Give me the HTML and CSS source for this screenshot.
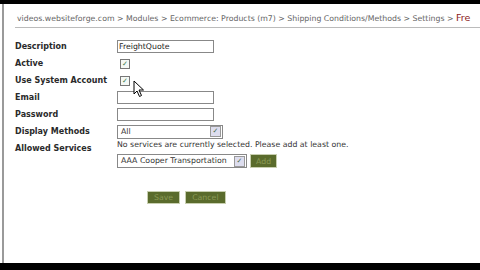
FILE: index.html
```html
<!DOCTYPE html>
<html lang="en">
<head>
    <meta charset="UTF-8">
    <title>Shipping Method Settings</title>
    <link rel="stylesheet" href="styles.css">
</head>
<body>
<div class="topbar"></div>
<div class="page">
    <div class="crumbs">
        videos.websiteforge.com &gt; Modules &gt; Ecommerce: Products (m7) &gt; Shipping Conditions/Methods &gt; Settings &gt; <span class="current">Fre</span>
    </div>

    <div class="form">
        <div class="row">
            <label>Description</label>
            <input class="text" type="text" value="FreightQuote">
        </div>
        <div class="row">
            <label>Active</label>
            <span class="check">&#10003;</span>
        </div>
        <div class="row">
            <label>Use System Account</label>
            <span class="check">&#10003;</span>
        </div>
        <div class="row">
            <label>Email</label>
            <input class="text" type="text">
        </div>
        <div class="row">
            <label>Password</label>
            <input class="text" type="password">
        </div>
        <div class="row">
            <label>Display Methods</label>
            <div class="select wide">All<span class="arrow">&#10003;</span></div>
        </div>
        <div class="row services">
            <label>Allowed Services</label>
            <div class="field">
                <div class="note">No services are currently selected. Please add at least one.</div>
                <div class="add-line">
                    <div class="select long">AAA Cooper Transportation<span class="arrow">&#10003;</span></div>
                    <button class="btn small">Add</button>
                </div>
            </div>
        </div>
        <div class="actions">
            <button class="btn">Save</button>
            <button class="btn">Cancel</button>
        </div>
    </div>

    <svg class="cursor" width="12" height="18" viewBox="0 0 12 18">
        <path d="M1 1 L1 14 L4 11 L6.5 16.5 L8.5 15.5 L6 10 L10.5 10 Z" fill="#fff" stroke="#000" stroke-width="1"/>
    </svg>
</div>
<div class="bottombar"></div>
</body>
</html>
```

FILE: styles.css
```css
body {
    margin: 0;
    background: #fff;
    font-family: "DejaVu Sans", Verdana, sans-serif;
    color: #333;
    width: 480px;
    height: 270px;
    overflow: hidden;
    display: flex;
    flex-direction: column;
}
.topbar {
    height: 4px;
    background: #000;
}
.bottombar {
    height: 7px;
    background: #000;
}
.page {
    flex: 1;
    position: relative;
    border-left: 2px solid #9a9a9a;
    margin-left: 2px;
    padding-left: 11px;
    overflow: hidden;
}
.crumbs {
    white-space: nowrap;
    font-size: 7.8px;
    color: #666;
    padding: 8px 0 4px 2px;
    border-bottom: 1px solid #bbb;
}
.crumbs .current {
    color: #8b1a1a;
    font-size: 9.5px;
}
.form {
    padding-top: 10px;
}
.row {
    display: flex;
    align-items: center;
    height: 17px;
}
.row label {
    width: 102px;
    font-size: 8px;
    font-weight: bold;
    color: #2a2a2a;
}
.text {
    width: 93px;
    height: 11px;
    border: 1px solid #888;
    padding: 0 1px;
    font-family: "DejaVu Sans", sans-serif;
    font-size: 7.8px;
    color: #222;
    margin: 0;
}
.check {
    width: 8px;
    height: 8px;
    margin-left: 3px;
    border: 1px solid #777;
    background: #f4f8f4;
    color: #3b7b4b;
    font-size: 7px;
    line-height: 8px;
    text-align: center;
}
.select {
    height: 12px;
    border: 1px solid #888;
    font-size: 7.8px;
    line-height: 12px;
    padding-left: 3px;
    display: flex;
    justify-content: space-between;
    align-items: center;
    white-space: nowrap;
}
.select.wide {
    width: 101px;
}
.select.long {
    width: 125px;
}
.arrow {
    width: 9px;
    height: 9px;
    margin-right: 1px;
    border: 1px solid #999;
    background: #dde;
    color: #4a6b4a;
    font-size: 7px;
    line-height: 9px;
    text-align: center;
}
.services {
    height: auto;
    align-items: flex-start;
}
.services label {
    padding-top: 4px;
}
.note {
    font-size: 7.8px;
    height: 11px;
    margin-bottom: 3px;
}
.add-line {
    display: flex;
    gap: 3px;
}
.btn {
    background: #5a6b2c;
    color: #8a9a55;
    border: 1px solid #c8cfb0;
    font-family: "DejaVu Sans", sans-serif;
    font-size: 7.8px;
    height: 13px;
    padding: 0 6px;
    margin: 0;
}
.btn.small {
    height: 14px;
    padding: 0 5px;
}
.actions {
    display: flex;
    gap: 5px;
    margin: 23px 0 0 132px;
}
.cursor {
    position: absolute;
    left: 129px;
    top: 76px;
}
```
